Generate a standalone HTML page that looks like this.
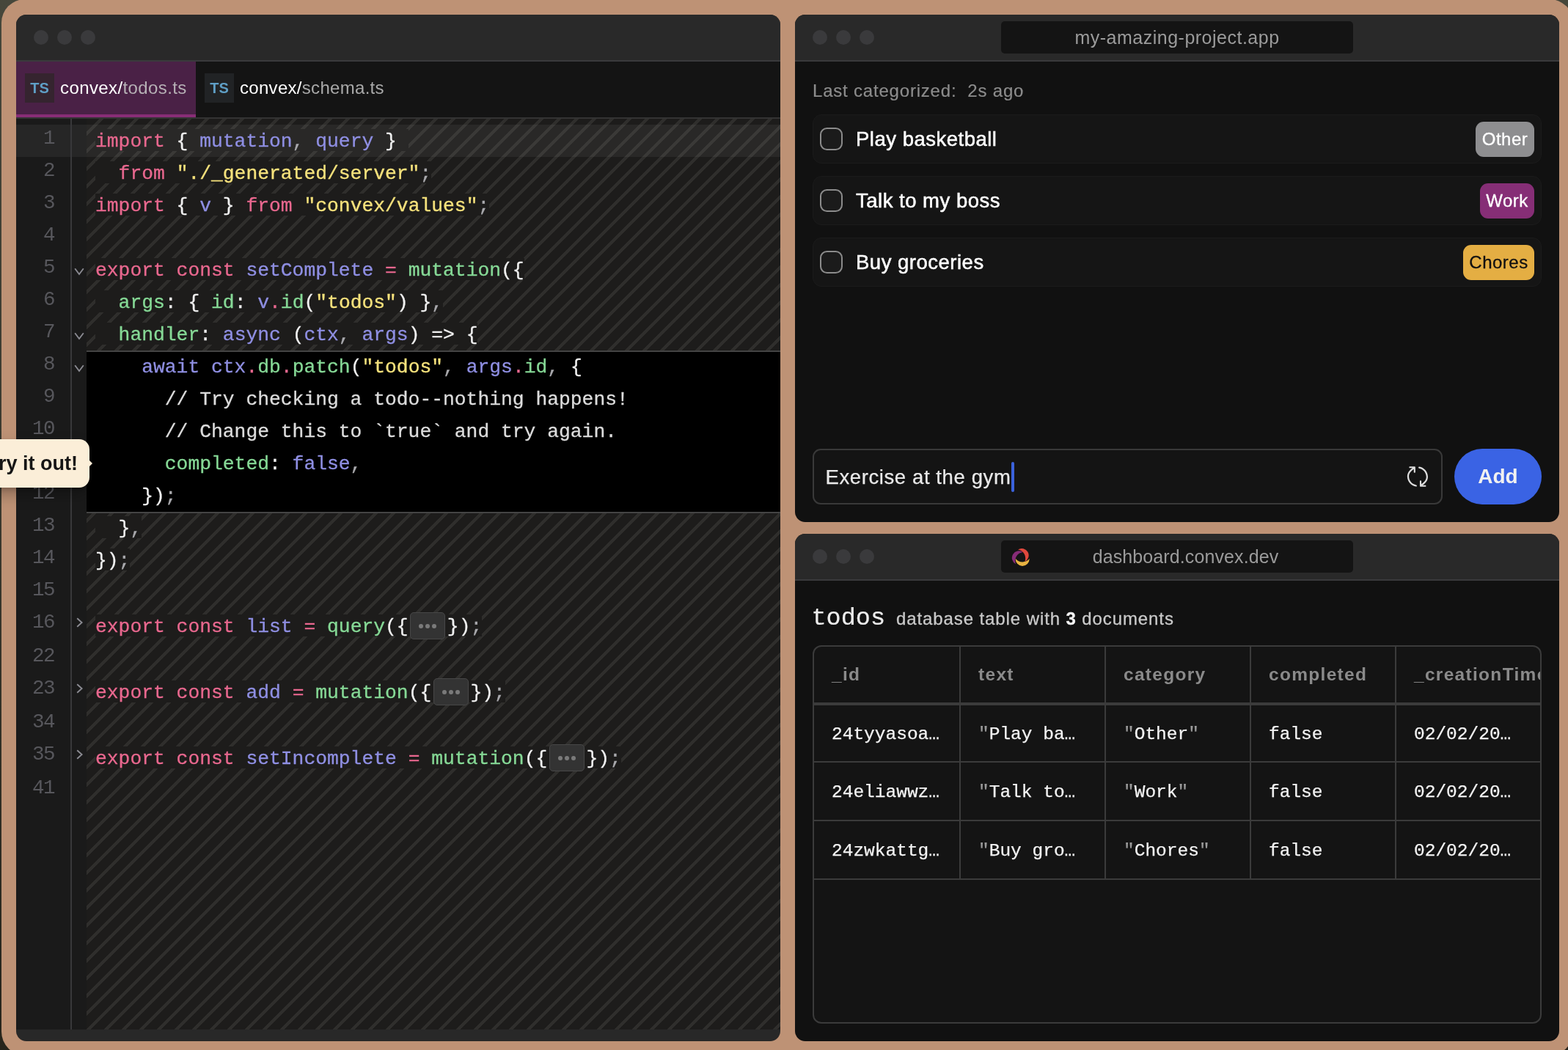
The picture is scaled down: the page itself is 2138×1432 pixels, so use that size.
<!DOCTYPE html>
<html lang="en">
<head>
<meta charset="utf-8">
<title>Convex demo</title>
<style>
html,body{margin:0;padding:0}
body{width:2138px;height:1432px;overflow:hidden;position:relative;background:linear-gradient(180deg,#46473b 0%,#3a382d 50%,#27251c 100%);font-family:"Liberation Sans",sans-serif;}
.frame{position:absolute;left:2px;top:-1px;width:2143px;height:1440px;border-radius:32px;background:#be9275}
.win{position:absolute;border-radius:14px;overflow:hidden;background:#111;will-change:transform}
.tbar{position:absolute;left:0;top:0;right:0;height:62px;background:#292929;border-bottom:2px solid #3a3a3c}
.dot{position:absolute;top:21px;width:20px;height:20px;border-radius:50%;background:#3a3a3c}
.url{position:absolute;left:281px;top:9px;width:480px;height:44px;border-radius:5px;background:#141414;color:#9b9b9b;font-size:25px;letter-spacing:.5px;line-height:44px;text-align:center;white-space:nowrap}
/* editor */
#ed{left:22px;top:20px;width:1042px;height:1400px;background:#282828}
.tabs{position:absolute;left:0;top:64px;right:0;height:76px;background:#141414;border-bottom:2px solid #333}
.tab{position:absolute;top:0;height:76px}
.tab.act{left:0;width:245px;background:#4a2146;box-shadow:inset 0 -4px 0 #882d76}
.ts{position:absolute;top:16px;width:40px;height:40px;background:#212325;color:#5f9fc6;font-weight:bold;font-size:20px;line-height:40px;text-align:center}
.tab.act .ts{background:#35242f}
.tl{position:absolute;top:16px;height:40px;line-height:40px;font-size:24px;letter-spacing:.4px;color:#fff;white-space:nowrap}
.tl b{font-weight:normal;color:#a9a9a9}
.tab.act .tl b{color:#b6b0b5}
.code{position:absolute;left:0;top:142px;width:1042px;height:1242px;background:#1a1a1a;overflow:hidden;font-family:"Liberation Mono",monospace;font-size:26.333px}
.gline{position:absolute;left:74px;top:0;width:2px;height:100%;background:#38383a}
.stripes{position:absolute;left:96px;top:-21.8px;right:0;height:1270px;background-color:#1d1c1b;background-image:repeating-linear-gradient(135deg,transparent 0,transparent 10.9px,#2f2e2c 11.3px,#2f2e2c 15px,transparent 15.4px,transparent 16.97px)}
.active{position:absolute;left:0;right:0;top:8px;height:44px;background:rgba(255,255,255,.055)}
.edit{position:absolute;left:96px;right:0;top:316px;height:218px;background:#000;border-top:2px solid #444;border-bottom:2px solid #444}
.ln{position:absolute;left:0;width:52.3px;font-size:27.5px;letter-spacing:-1.3px;height:44px;line-height:37.6px;text-align:right;color:#57575c}
.chev{position:absolute}
.cl{position:absolute;left:108px;height:29.9px;line-height:34.4px;white-space:pre;color:#f1f1f1;-webkit-text-stroke:.3px currentColor}
.cl .tx{display:inline-block;height:29.9px;background:#1d1c1b;vertical-align:top}
.cl.hl .tx{background:transparent}
.cl.a1 .tx{background:#292827}
.k{color:#e9688f}.p{color:#8f8fe3}.g{color:#86d996}.s{color:#f6e27c}.c{color:#a9a9ad}.m{color:#dcdcdc}
.fold{display:inline-block;box-sizing:border-box;width:48px;height:37px;margin:0 2.6px;border:1px solid #474747;border-radius:5px;background:#333;vertical-align:top;position:relative;top:-3.2px;text-align:center;line-height:36px;font-size:0}
.fold i{display:inline-block;width:5.8px;height:5.8px;margin:0 1.65px;border-radius:50%;background:#7a7a7a;vertical-align:middle}
.tip{will-change:transform;position:absolute;left:-60px;top:599px;width:182px;height:66px;border-radius:14px;background:#fbeed8;box-shadow:0 10px 20px rgba(0,0,0,.26),0 3px 6px rgba(0,0,0,.15);color:#151515;font-weight:bold;font-size:27px;line-height:66px;white-space:nowrap}
.tip span{position:absolute;right:16px;top:0}
.tip:after{content:"";position:absolute;left:181.5px;top:28.5px;border-left:4px solid #fbeed8;border-top:4.5px solid transparent;border-bottom:4.5px solid transparent}
/* app */
#app{left:1084px;top:20px;width:1042px;height:692px}
.last{-webkit-text-stroke:.2px currentColor;position:absolute;left:24px;top:88px;font-size:24px;line-height:32px;color:#8c8c8c;white-space:pre;letter-spacing:.8px}
.todo{position:absolute;left:24px;width:992px;height:65px;border:1px solid #1b1b1b;border-radius:12px;background:#151515}
.cb{position:absolute;left:9px;top:17px;width:27px;height:27px;border:2.5px solid #8b8b8b;border-radius:9.5px;background:#1b1b1b}
.tt{position:absolute;left:58px;top:0;height:65px;line-height:65px;font-size:27.5px;letter-spacing:.5px;color:#fff;white-space:nowrap;-webkit-text-stroke:.5px #fff}
.bd{position:absolute;right:9px;top:9px;height:48px;border-radius:11px;line-height:47.5px;font-size:24px;letter-spacing:.5px;color:#fff;text-align:center;-webkit-text-stroke:.3px currentColor}
.inp{position:absolute;left:24px;top:592px;width:855px;height:72px;border:2px solid #393939;border-radius:11px;background:#141414}
.inp span{-webkit-text-stroke:.25px currentColor;position:absolute;left:15.5px;top:1px;line-height:72px;font-size:27.5px;letter-spacing:.6px;color:#e9e9e9;white-space:nowrap}
.caret{position:absolute;left:269px;top:16px;width:4px;height:41px;border-radius:2px;background:#3b62dc}
.add{position:absolute;left:899px;top:592px;width:119px;height:76px;border-radius:38px;background:#3a63e4;color:#f1f1f1;font-weight:bold;font-size:28px;line-height:76px;text-align:center}
/* dashboard */
#db{left:1084px;top:728px;width:1042px;height:692px}
.h{position:absolute;left:22.5px;top:92.5px;-webkit-text-stroke:.3px currentColor;height:44px;line-height:44px;white-space:nowrap;color:#c9c9c9;font-size:24px;letter-spacing:.9px}
.h code{-webkit-text-stroke:.2px currentColor;font-family:"Liberation Mono",monospace;font-size:33.5px;letter-spacing:0;color:#ececec;margin-right:15px}
.h b{color:#f4f4f4}
.tbl{position:absolute;left:24px;top:152px;width:990px;height:512px;border:2px solid #3b3b3b;border-radius:12px;background:#141414;overflow:hidden;font-family:"Liberation Mono",monospace;font-size:24.5px}
.vl{position:absolute;top:0;width:2px;height:318px;background:#3b3b3b}
.hl2{position:absolute;left:0;right:0;background:#3b3b3b}
.th,.td{position:absolute;white-space:nowrap;height:40px;line-height:40px}
.th{color:#8a8a8a;font-weight:bold;font-family:"Liberation Sans",sans-serif;font-size:24.5px;letter-spacing:1.3px;margin-top:-.4px}
.td{color:#f3f3f3;margin-top:2px;-webkit-text-stroke:.25px currentColor}
.td q{quotes:none;color:#9a9a9a}
</style>
</head>
<body>
<div class="frame"></div>

<div class="win" id="ed">
  <div class="tbar"><div class="dot" style="left:24px"></div><div class="dot" style="left:56px"></div><div class="dot" style="left:88px"></div></div>
  <div class="tabs">
    <div class="tab act"><div class="ts" style="left:12px">TS</div><div class="tl" style="left:60px">convex/<b>todos.ts</b></div></div>
    <div class="tab" style="left:245px;width:270px"><div class="ts" style="left:12px">TS</div><div class="tl" style="left:60px;letter-spacing:.3px">convex/<b>schema.ts</b></div></div>
  </div>
  <div class="code">
    <div class="stripes"></div>
    <div class="active"></div>
    <div class="edit"></div>
    <div class="gline"></div>
<div class="ln" style="top:8.0px">1</div>
<div class="ln" style="top:52.0px">2</div>
<div class="ln" style="top:96.0px">3</div>
<div class="ln" style="top:140.0px">4</div>
<div class="ln" style="top:184.0px">5</div>
<svg class="chev" style="top:202.7px;left:79px" width="14" height="11" viewBox="0 0 14 11"><path d="M1.2 1.2 L7 9 L12.8 1.2" fill="none" stroke="#8b8b92" stroke-width="1.9"/></svg>
<div class="ln" style="top:228.0px">6</div>
<div class="ln" style="top:272.0px">7</div>
<svg class="chev" style="top:290.7px;left:79px" width="14" height="11" viewBox="0 0 14 11"><path d="M1.2 1.2 L7 9 L12.8 1.2" fill="none" stroke="#8b8b92" stroke-width="1.9"/></svg>
<div class="ln" style="top:316.0px">8</div>
<svg class="chev" style="top:334.7px;left:79px" width="14" height="11" viewBox="0 0 14 11"><path d="M1.2 1.2 L7 9 L12.8 1.2" fill="none" stroke="#8b8b92" stroke-width="1.9"/></svg>
<div class="ln" style="top:360.0px">9</div>
<div class="ln" style="top:404.0px">10</div>
<div class="ln" style="top:448.0px">11</div>
<div class="ln" style="top:492.0px">12</div>
<div class="ln" style="top:536.0px">13</div>
<div class="ln" style="top:580.0px">14</div>
<div class="ln" style="top:624.0px">15</div>
<div class="ln" style="top:668.0px">16</div>
<svg class="chev" style="top:679.8px;left:82px" width="9" height="14" viewBox="0 0 9 14"><path d="M1.2 1.2 L7.6 7 L1.2 12.8" fill="none" stroke="#8b8b92" stroke-width="1.9"/></svg>
<div class="ln" style="top:714.0px">22</div>
<div class="ln" style="top:758.0px">23</div>
<svg class="chev" style="top:769.8px;left:82px" width="9" height="14" viewBox="0 0 9 14"><path d="M1.2 1.2 L7.6 7 L1.2 12.8" fill="none" stroke="#8b8b92" stroke-width="1.9"/></svg>
<div class="ln" style="top:804.0px">34</div>
<div class="ln" style="top:848.0px">35</div>
<svg class="chev" style="top:859.8px;left:82px" width="9" height="14" viewBox="0 0 9 14"><path d="M1.2 1.2 L7.6 7 L1.2 12.8" fill="none" stroke="#8b8b92" stroke-width="1.9"/></svg>
<div class="ln" style="top:894.0px">41</div>
<div class="cl a1" style="top:14.4px"><span class="tx"><span class="k">import</span> { <span class="p">mutation</span><span class="c">,</span> <span class="p">query</span> } </span></div>
<div class="cl" style="top:58.4px"><span class="tx">  <span class="k">from</span> <span class="s">"./_generated/server"</span><span class="c">;</span></span></div>
<div class="cl" style="top:102.4px"><span class="tx"><span class="k">import</span> { <span class="p">v</span> } <span class="k">from</span> <span class="s">"convex/values"</span><span class="c">;</span></span></div>
<div class="cl" style="top:190.4px"><span class="tx"><span class="k">export</span> <span class="k">const</span> <span class="p">setComplete</span> <span class="k">=</span> <span class="g">mutation</span>({</span></div>
<div class="cl" style="top:234.4px"><span class="tx">  <span class="g">args</span>: { <span class="g">id</span>: <span class="p">v</span><span class="k">.</span><span class="g">id</span>(<span class="s">"todos"</span>) }<span class="c">,</span></span></div>
<div class="cl" style="top:278.4px"><span class="tx">  <span class="g">handler</span>: <span class="p">async</span> (<span class="p">ctx</span><span class="c">,</span> <span class="p">args</span>) =&gt; {</span></div>
<div class="cl hl" style="top:322.4px"><span class="tx">    <span class="p">await</span> <span class="p">ctx</span><span class="k">.</span><span class="g">db</span><span class="k">.</span><span class="g">patch</span>(<span class="s">"todos"</span><span class="c">,</span> <span class="p">args</span><span class="k">.</span><span class="g">id</span><span class="c">,</span> {</span></div>
<div class="cl hl" style="top:366.4px"><span class="tx">      <span class="m">// Try checking a todo--nothing happens!</span></span></div>
<div class="cl hl" style="top:410.4px"><span class="tx">      <span class="m">// Change this to `true` and try again.</span></span></div>
<div class="cl hl" style="top:454.4px"><span class="tx">      <span class="g">completed</span>: <span class="p">false</span><span class="c">,</span></span></div>
<div class="cl hl" style="top:498.4px"><span class="tx">    })<span class="c">;</span></span></div>
<div class="cl" style="top:542.4px"><span class="tx">  }<span class="c">,</span></span></div>
<div class="cl" style="top:586.4px"><span class="tx">})<span class="c">;</span></span></div>
<div class="cl" style="top:676.1px"><span class="tx"><span class="k">export</span> <span class="k">const</span> <span class="p">list</span> <span class="k">=</span> <span class="g">query</span>({<span class="fold"><i></i><i></i><i></i></span>})<span class="c">;</span></span></div>
<div class="cl" style="top:766.1px"><span class="tx"><span class="k">export</span> <span class="k">const</span> <span class="p">add</span> <span class="k">=</span> <span class="g">mutation</span>({<span class="fold"><i></i><i></i><i></i></span>})<span class="c">;</span></span></div>
<div class="cl" style="top:856.1px"><span class="tx"><span class="k">export</span> <span class="k">const</span> <span class="p">setIncomplete</span> <span class="k">=</span> <span class="g">mutation</span>({<span class="fold"><i></i><i></i><i></i></span>})<span class="c">;</span></span></div>
  </div>
</div>

<div class="tip"><span>Try it out!</span></div>

<div class="win" id="app">
  <div class="tbar"><div class="dot" style="left:24px"></div><div class="dot" style="left:56px"></div><div class="dot" style="left:88px"></div><div class="url">my-amazing-project.app</div></div>
  <div class="last">Last categorized:  2s ago</div>
  <div class="todo" style="top:136px"><div class="cb"></div><div class="tt">Play basketball</div><div class="bd" style="width:80px;background:#8e8e90">Other</div></div>
  <div class="todo" style="top:220px"><div class="cb"></div><div class="tt">Talk to my boss</div><div class="bd" style="width:74px;background:#862e76">Work</div></div>
  <div class="todo" style="top:304px"><div class="cb"></div><div class="tt">Buy groceries</div><div class="bd" style="width:97px;background:#e4ae43;color:#111">Chores</div></div>
  <div class="inp"><span>Exercise at the gym</span><div class="caret"></div>
    <svg style="position:absolute;left:807px;top:20px" width="32" height="32" viewBox="0 0 15 15"><path fill="#dedede" fill-rule="evenodd" clip-rule="evenodd" d="M1.90321 7.29677C1.90321 10.341 4.11041 12.4147 6.58893 12.8439C6.87255 12.893 7.06266 13.1627 7.01355 13.4464C6.96444 13.73 6.69471 13.9201 6.41109 13.871C3.49942 13.3668 0.86084 10.9127 0.86084 7.29677C0.860839 5.76009 1.55996 4.55245 2.37639 3.63377C2.96124 2.97568 3.63034 2.44135 4.16846 2.03202L2.53205 2.03202C2.25591 2.03202 2.03205 1.80816 2.03205 1.53202C2.03205 1.25588 2.25591 1.03202 2.53205 1.03202L5.53205 1.03202C5.80819 1.03202 6.03205 1.25588 6.03205 1.53202L6.03205 4.53202C6.03205 4.80816 5.80819 5.03202 5.53205 5.03202C5.25591 5.03202 5.03205 4.80816 5.03205 4.53202L5.03205 2.68645C4.45896 3.11868 3.76059 3.64538 3.15554 4.3262C2.44102 5.13021 1.90321 6.10154 1.90321 7.29677ZM13.0109 7.70321C13.0109 4.69115 10.8505 2.6296 8.40384 2.17029C8.12093 2.11718 7.93465 1.84479 7.98776 1.56188C8.04087 1.27898 8.31326 1.0927 8.59616 1.14581C11.4704 1.68541 14.0532 4.12605 14.0532 7.70321C14.0532 9.23988 13.3541 10.4475 12.5377 11.3662C11.9528 12.0243 11.2837 12.5586 10.7456 12.968L12.3821 12.968C12.6582 12.968 12.8821 13.1918 12.8821 13.468C12.8821 13.7441 12.6582 13.968 12.3821 13.968L9.38205 13.968C9.10591 13.968 8.88205 13.7441 8.88205 13.468L8.88205 10.468C8.88205 10.1918 9.10591 9.96796 9.38205 9.96796C9.65819 9.96796 9.88205 10.1918 9.88205 10.468L9.88205 12.3135C10.4551 11.8813 11.1535 11.3546 11.7585 10.6738C12.4731 9.86976 13.0109 8.89844 13.0109 7.70321Z"/></svg>
  </div>
  <div class="add">Add</div>
</div>

<div class="win" id="db">
  <div class="tbar"><div class="dot" style="left:24px"></div><div class="dot" style="left:56px"></div><div class="dot" style="left:88px"></div>
    <div class="url" style="text-indent:23px;letter-spacing:.1px">dashboard.convex.dev
      <svg style="position:absolute;left:14px;top:10px" width="26.4" height="26.4" viewBox="-14 -14 28 28"><path fill="#e8b341" d="M12.1 1.9A10.07 10.07 0 1 1-8 1.6A12.84 12.84 0 0 0 12.1 1.9Z"/><path fill="#872c78" transform="rotate(120)" d="M12.1 1.9A10.07 10.07 0 1 1-8 1.6A12.84 12.84 0 0 0 12.1 1.9Z"/><path fill="#e0483d" transform="rotate(240)" d="M12.1 1.9A10.07 10.07 0 1 1-8 1.6A12.84 12.84 0 0 0 12.1 1.9Z"/></svg>
    </div>
  </div>
  <div class="h"><code>todos</code>database table with <b>3</b> documents</div>
  <div class="tbl">
    <div class="vl" style="left:198px"></div><div class="vl" style="left:396px"></div><div class="vl" style="left:594px"></div><div class="vl" style="left:792px"></div>
    <div class="hl2" style="top:76px;height:4px"></div>
    <div class="hl2" style="top:156px;height:2px"></div>
    <div class="hl2" style="top:236px;height:2px"></div>
    <div class="hl2" style="top:316px;height:2px"></div>
    <div class="th" style="left:24px;top:18px">_id</div><div class="th" style="left:224px;top:18px">text</div><div class="th" style="left:422px;top:18px">category</div><div class="th" style="left:620px;top:18px">completed</div><div class="th" style="left:818px;top:18px">_creationTime</div>
    <div class="td" style="left:24px;top:98px">24tyyasoa…</div><div class="td" style="left:224px;top:98px"><q>"</q>Play ba…</div><div class="td" style="left:422px;top:98px"><q>"</q>Other<q>"</q></div><div class="td" style="left:620px;top:98px">false</div><div class="td" style="left:818px;top:98px">02/02/20…</div>
    <div class="td" style="left:24px;top:177px">24eliawwz…</div><div class="td" style="left:224px;top:177px"><q>"</q>Talk to…</div><div class="td" style="left:422px;top:177px"><q>"</q>Work<q>"</q></div><div class="td" style="left:620px;top:177px">false</div><div class="td" style="left:818px;top:177px">02/02/20…</div>
    <div class="td" style="left:24px;top:257px">24zwkattg…</div><div class="td" style="left:224px;top:257px"><q>"</q>Buy gro…</div><div class="td" style="left:422px;top:257px"><q>"</q>Chores<q>"</q></div><div class="td" style="left:620px;top:257px">false</div><div class="td" style="left:818px;top:257px">02/02/20…</div>
  </div>
</div>
</body>
</html>
